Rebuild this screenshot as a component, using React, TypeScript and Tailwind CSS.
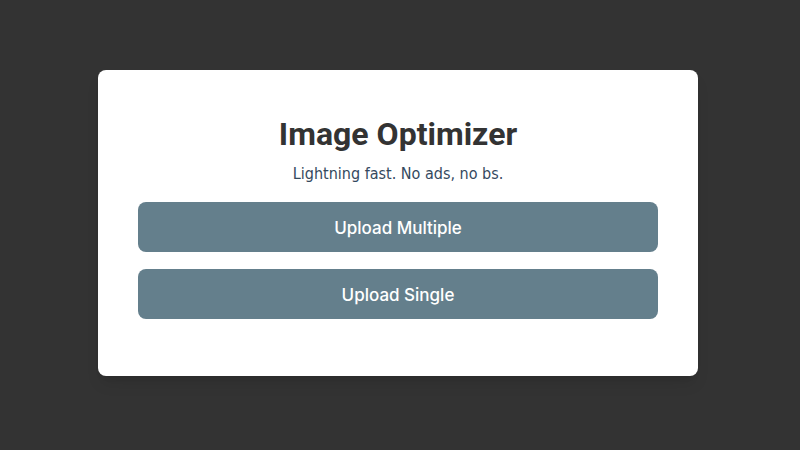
export default function App() {
  return (
    <div className="w-[800px] h-[450px] bg-[#333333] flex items-center justify-center pr-[4px] pb-[4px]">
      <div className="w-[600px] h-[306px] bg-white rounded-lg shadow-lg px-10 pt-[45px] flex flex-col items-center">
        <h1 className="text-[32px] leading-[38px] font-bold text-[#333333] font-['Roboto',sans-serif]">Image Optimizer</h1>
        <p className="mt-[11px] text-[16px] leading-[20px] text-[#34495e] font-['DejaVu_Sans_Condensed','DejaVu_Sans',sans-serif]">Lightning fast. No ads, no bs.</p>
        <button className="mt-[18px] w-full h-[50px] pt-[3px] rounded-lg bg-[#647f8c] text-white text-[17px] font-['Inter',sans-serif] font-medium">Upload Multiple</button>
        <button className="mt-[17px] w-full h-[50px] pt-[3px] rounded-lg bg-[#647f8c] text-white text-[17px] font-['Inter',sans-serif] font-medium">Upload Single</button>
      </div>
    </div>
  );
}
